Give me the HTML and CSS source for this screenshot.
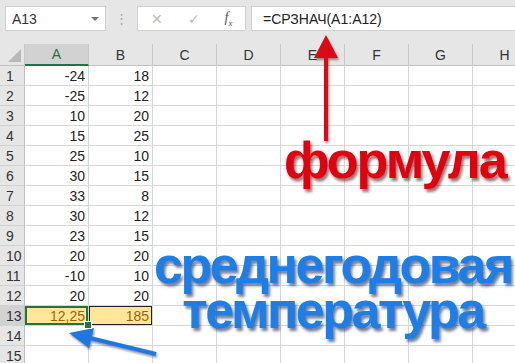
FILE: index.html
```html
<!DOCTYPE html>
<html>
<head>
  <meta charset="UTF-8">
  <title>Среднее значение</title>
  <link rel="stylesheet" href="styles.css">
</head>
<body>
  <div class="page">
    <div class="toolbar">
      <div class="namebox">
        <span>A13</span>
        <span class="caret"></span>
      </div>
      <div class="grip">⋮</div>
      <div class="buttons">
        <span class="btn">✕</span>
        <span class="btn">✓</span>
        <span class="btn fx">f<sub>x</sub></span>
      </div>
      <div class="formula">=СРЗНАЧ(A1:A12)</div>
    </div>

    <div class="sheet" id="sheet">
      <div class="corner"><span class="tri"></span></div>
      <div class="colhead selected">A</div>
      <div class="colhead">B</div>
      <div class="colhead">C</div>
      <div class="colhead">D</div>
      <div class="colhead">E</div>
      <div class="colhead">F</div>
      <div class="colhead">G</div>
      <div class="colhead">H</div>
    </div>

    <div class="note note-red">формула</div>
    <div class="note note-blue">среднегодовая
температура</div>

    <svg class="arrow arrow-red" width="515" height="363" viewBox="0 0 515 363">
      <line x1="326" y1="141" x2="326" y2="54" stroke="#dc0a14" stroke-width="4"/>
      <polygon points="326,35 314,58 338,58" fill="#dc0a14"/>
    </svg>
    <svg class="arrow arrow-blue" width="515" height="363" viewBox="0 0 515 363">
      <line x1="156" y1="354" x2="90" y2="338" stroke="#1f78e0" stroke-width="4"/>
      <polygon points="69,333 94,328 89,348" fill="#1f78e0"/>
    </svg>
  </div>

  <script>
    var a = ['-24', '-25', '10', '15', '25', '30', '33', '30', '23', '20', '-10', '20', '12,25', '', ''];
    var b = ['18', '12', '20', '25', '10', '15', '8', '12', '15', '20', '10', '20', '185', '', ''];
    var sheet = document.querySelector('#sheet');

    for (var i = 0; i < a.length; i++) {
      var row = i + 1;
      var head = document.createElement('div');
      head.className = 'rowhead' + (row === 13 ? ' selected' : '');
      head.textContent = row;
      sheet.appendChild(head);

      for (var c = 0; c < 8; c++) {
        var cell = document.createElement('div');
        cell.className = 'cell';
        if (c === 0) cell.textContent = a[i];
        if (c === 1) cell.textContent = b[i];
        if (row === 13 && c === 0) cell.className += ' total active';
        if (row === 13 && c === 1) cell.className += ' total boxed';
        sheet.appendChild(cell);
      }
    }
  </script>
</body>
</html>
```

FILE: styles.css
```css
body {
  margin: 0;
  font-family: "Liberation Sans", Arial, sans-serif;
  background: #fff;
  overflow: hidden;
}

.page {
  position: relative;
  width: 515px;
  height: 363px;
  overflow: hidden;
}

.toolbar {
  display: flex;
  align-items: center;
  height: 44px;
  padding: 0 0 0 5px;
  background: #e6e6e6;
  box-sizing: border-box;
}

.namebox {
  display: flex;
  align-items: center;
  justify-content: space-between;
  width: 101px;
  height: 25px;
  margin-bottom: 7px;
  padding: 0 6px 0 6px;
  box-sizing: border-box;
  background: #fff;
  border: 1px solid #d0d0d0;
  font-size: 14px;
  color: #333;
}

.caret {
  width: 0;
  height: 0;
  border-left: 4px solid transparent;
  border-right: 4px solid transparent;
  border-top: 4px solid #777;
}

.grip {
  width: 31px;
  margin-bottom: 7px;
  text-align: center;
  color: #a8a8a8;
  font-size: 13px;
}

.buttons {
  display: flex;
  align-items: center;
  justify-content: space-around;
  width: 109px;
  height: 25px;
  margin-bottom: 7px;
  box-sizing: border-box;
  background: #fff;
  border: 1px solid #d0d0d0;
  color: #b9b9b9;
  font-size: 14px;
}

.fx {
  color: #555;
  font-family: "Liberation Serif", serif;
  font-style: italic;
  font-size: 14px;
}

.fx sub {
  font-size: 9px;
}

.formula {
  flex: 1;
  height: 25px;
  margin: 0 0 7px 5px;
  padding-left: 11px;
  line-height: 24px;
  box-sizing: border-box;
  background: #fff;
  border: 1px solid #d0d0d0;
  border-right: none;
  font-size: 14px;
  color: #222;
}

.sheet {
  display: grid;
  grid-template-columns: 25px repeat(8, 64px);
  grid-template-rows: 22px;
  grid-auto-rows: 20px;
  font-size: 13px;
  color: #222;
}

.corner {
  position: relative;
  background: #e6e6e6;
  border-right: 1px solid #c8c8c8;
  border-bottom: 1px solid #c0c0c0;
}

.tri {
  position: absolute;
  right: 3px;
  bottom: 3px;
  width: 0;
  height: 0;
  border-left: 13px solid transparent;
  border-bottom: 13px solid #b8b8b8;
}

.colhead {
  display: flex;
  align-items: center;
  justify-content: center;
  background: #e6e6e6;
  border-right: 1px solid #c8c8c8;
  border-bottom: 1px solid #c0c0c0;
  color: #333;
  font-size: 14px;
}

.colhead.selected {
  background: #d2d2d2;
  color: #217346;
  border-bottom: 2px solid #217346;
}

.rowhead {
  display: flex;
  align-items: center;
  padding-left: 6px;
  background: #e6e6e6;
  border-right: 1px solid #c0c0c0;
  border-bottom: 1px solid #d0d0d0;
  color: #333;
  font-size: 14px;
}

.rowhead.selected {
  background: #d2d2d2;
}

.cell {
  display: flex;
  align-items: center;
  justify-content: flex-end;
  padding-right: 3px;
  border-right: 1px solid #d6d6d6;
  border-bottom: 1px solid #d6d6d6;
  font-size: 14px;
}

.total {
  background: #ffe699;
  color: #9c6500;
}

.active {
  position: relative;
  box-shadow: inset 0 0 0 2px #217346;
}

.active::after {
  content: "";
  position: absolute;
  right: -4px;
  bottom: -4px;
  width: 6px;
  height: 6px;
  background: #217346;
  border: 1px solid #fff;
  z-index: 2;
}

.boxed {
  box-shadow: inset 0 0 0 1px #222;
}

.note {
  position: absolute;
  font-weight: bold;
  font-size: 52px;
  letter-spacing: -2px;
  line-height: 45px;
  text-align: center;
  white-space: pre-line;
}

.note-red {
  left: 284px;
  top: 138px;
  color: #e2000e;
  text-shadow: 2px 3px 3px rgba(60, 0, 0, 0.55);
}

.note-blue {
  left: 154px;
  top: 243px;
  letter-spacing: -2.5px;
  color: #1c7ee6;
  text-shadow: 2px 3px 3px rgba(0, 20, 60, 0.55);
}

.arrow {
  position: absolute;
  left: 0;
  top: 0;
}

.arrow-red {
  filter: drop-shadow(1px 2px 1px rgba(60, 0, 0, 0.45));
}

.arrow-blue {
  filter: drop-shadow(1px 2px 1px rgba(0, 20, 60, 0.45));
}
```
